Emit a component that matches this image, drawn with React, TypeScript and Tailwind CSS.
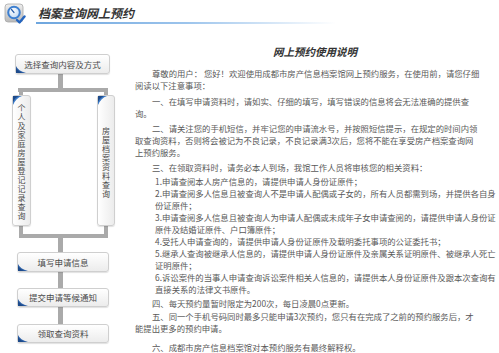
import React from "react";

const font = "font-['Noto_Sans_CJK_SC','Noto_Sans',sans-serif]";

function CornerBL() {
  return (
    <svg className="absolute left-0 bottom-0" width="10" height="7" viewBox="0 0 10 7">
      <path d="M0 0 Q2 5 10 7 L0 7 Z" fill="#2c5fa6" />
      <path d="M0 2 Q2 5.5 7 7 L0 7 Z" fill="#1d4a8a" />
    </svg>
  );
}

function CornerTL() {
  return (
    <svg className="absolute left-0 top-0" width="9" height="9" viewBox="0 0 9 9">
      <path d="M0 0 L9 0 Q3 2 0 9 Z" fill="#3a78c4" />
      <path d="M0 0 L6 0 Q2 1.5 0 6 Z" fill="#1d4a8a" />
    </svg>
  );
}

function HBox({ text, h, ml, w }: { text: string; h: string; ml: string; w: string }) {
  return (
    <div
      className={`relative ${ml} ${w} ${h} rounded-[3px] border border-[#cfcfcf] bg-gradient-to-b from-white to-[#ececec] shadow-[0_1px_1px_rgba(0,0,0,0.12)] flex items-center justify-center text-[8.5px] leading-none text-[#4a4a4a]`}
    >
      {text}
      <CornerBL />
    </div>
  );
}

function VBox({ text, w }: { text: string; w: string }) {
  return (
    <div
      className={`relative ${w} h-[131px] rounded-[3px] border border-[#cfcfcf] bg-gradient-to-r from-white to-[#ececec] shadow-[0_1px_1px_rgba(0,0,0,0.12)] flex items-center justify-center pt-[4px] text-[8px] text-[#4a4a4a]`}
    >
      <div className="[writing-mode:vertical-rl] tracking-[1px] leading-[9px]">{text}</div>
      <CornerTL />
    </div>
  );
}

const bar = "bg-[#aaaaaa]";

function Flow() {
  return (
    <div className="w-[120px] shrink-0 flex flex-col pt-[30px]">
      <HBox text="选择查询内容及方式" h="h-[20px]" ml="ml-[15px]" w="w-[95px]" />
      <div className={`ml-[58px] w-[5px] h-[14px] ${bar}`} />
      <div className={`ml-[18px] w-[90px] h-[4px] ${bar}`} />
      <div className="flex">
        <div className="ml-[12px] flex flex-col">
          <div className={`ml-[7px] w-[4px] h-[3px] ${bar}`} />
          <VBox text="个人及家庭房屋登记记录查询" w="w-[19px]" />
          <div className={`ml-[7px] w-[4px] h-[8px] ${bar}`} />
        </div>
        <div className="ml-[66px] flex flex-col">
          <div className={`ml-[7px] w-[4px] h-[3px] ${bar}`} />
          <VBox text="房屋档案资料查询" w="w-[18px]" />
          <div className={`ml-[7px] w-[4px] h-[8px] ${bar}`} />
        </div>
      </div>
      <div className={`ml-[19px] w-[89px] h-[4px] ${bar}`} />
      <div className={`ml-[58px] w-[5px] h-[14px] ${bar}`} />
      <HBox text="填写申请信息" h="h-[20px]" ml="ml-[17px]" w="w-[92px]" />
      <div className={`ml-[58px] w-[5px] h-[16px] ${bar}`} />
      <HBox text="提交申请等候通知" h="h-[19px]" ml="ml-[17px]" w="w-[92px]" />
      <div className={`ml-[58px] w-[5px] h-[17px] ${bar}`} />
      <HBox text="领取查询资料" h="h-[19px]" ml="ml-[17px]" w="w-[92px]" />
    </div>
  );
}

function P({ lines, mt, pl = "pl-0" }: { lines: string[]; mt: string; pl?: string }) {
  return (
    <div className={`${mt} ${pl}`}>
      {lines.map((l, i) => (
        <div key={i} className={`h-[12px] leading-[12px] whitespace-nowrap ${i === 0 && pl === "pl-0" ? "pl-[17px]" : ""}`}>
          {l}
        </div>
      ))}
    </div>
  );
}

function Content() {
  return (
    <div className="w-[379px] shrink-0 pl-[15px] pr-[4px] flex flex-col">
      <div className="mt-[21px] h-[14px] leading-[14px] text-center text-[10.5px] font-bold italic text-[#333]">
        网上预约使用说明
      </div>
      <div className="text-[8.35px] text-[#595959]">
        <P
          mt="mt-[8px]"
          lines={[
            "尊敬的用户： 您好！欢迎使用成都市房产信息档案馆网上预约服务，在使用前，请您仔细",
            "阅读以下注意事项：",
          ]}
        />
        <P
          mt="mt-[4px]"
          lines={["一、在填写申请资料时，请如实、仔细的填写，填写错误的信息将会无法准确的提供查", "询。"]}
        />
        <P
          mt="mt-[3px]"
          lines={[
            "二、请关注您的手机短信，并牢记您的申请流水号，并按照短信提示，在规定的时间内领",
            "取查询资料，否则将会被记为不良记录，不良记录满3次后，您将不能在享受房产档案查询网",
            "上预约服务。",
          ]}
        />
        <P mt="mt-[3px]" lines={["三、在领取资料时，请务必本人到场，我馆工作人员将审核您的相关资料："]} />
        <P
          mt="mt-[2px]"
          pl="pl-[20px]"
          lines={[
            "1.申请查阅本人房产信息的，请提供申请人身份证原件；",
            "2.申请查阅多人信息且被查询人不是申请人配偶或子女的，所有人员都需到场，并提供各自身",
            "份证原件；",
            "3.申请查阅多人信息且被查询人为申请人配偶或未成年子女申请查阅的，请提供申请人身份证",
            "原件及结婚证原件、户口簿原件；",
            "4.受托人申请查询的，请提供申请人身份证原件及载明委托事项的公证委托书；",
            "5.继承人查询被继承人信息的，请提供申请人身份证原件及亲属关系证明原件、被继承人死亡",
            "证明原件；",
            "6.诉讼案件的当事人申请查询诉讼案件相关人信息的，请提供本人身份证原件及跟本次查询有",
            "直接关系的法律文书原件。",
          ]}
        />
        <P mt="mt-[2px]" lines={["四、每天预约量暂时限定为200次，每日凌晨0点更新。"]} />
        <P
          mt="mt-[1px]"
          lines={["五、同一个手机号码同时最多只能申请3次预约，您只有在完成了之前的预约服务后，才", "能提出更多的预约申请。"]}
        />
        <P mt="mt-[7px]" lines={["六、成都市房产信息档案馆对本预约服务有最终解释权。"]} />
      </div>
    </div>
  );
}

function HeaderIcon() {
  return (
    <svg width="22" height="22" viewBox="0 0 22 22">
      <defs>
        <linearGradient id="ig" x1="0" y1="0" x2="0" y2="1">
          <stop offset="0" stopColor="#eeeeee" />
          <stop offset="1" stopColor="#b9b9b9" />
        </linearGradient>
        <radialGradient id="face" cx="0.4" cy="0.35" r="0.7">
          <stop offset="0" stopColor="#ffffff" />
          <stop offset="1" stopColor="#bcd6f2" />
        </radialGradient>
      </defs>
      <rect x="1" y="1" width="18" height="18" rx="3" fill="url(#ig)" stroke="#a8a8a8" strokeWidth="0.8" />
      <circle cx="10" cy="9.5" r="5.8" fill="url(#face)" stroke="#3d7fd0" strokeWidth="2" />
      <path d="M10 9.5 L7.5 6.5" stroke="#2a5ea8" strokeWidth="1.2" strokeLinecap="round" />
      <path d="M13 17 L15.5 19.5 L20.5 13.5" stroke="#2566c0" strokeWidth="2.4" fill="none" strokeLinecap="round" strokeLinejoin="round" />
    </svg>
  );
}

export default function App() {
  return (
    <div className={`w-[499px] h-[353px] bg-white overflow-hidden ${font}`}>
      <div className="flex items-start h-[24px]">
        <div className="ml-[4px] mt-[3px]">
          <HeaderIcon />
        </div>
        <div className="ml-[10px] flex flex-col">
          <div className="pl-[2px] mt-[6px] h-[14px] leading-[14px] text-[12px] font-bold italic text-[#333]">
            档案查询网上预约
          </div>
          <div className="mt-[2px] w-[300px] h-[2px] bg-gradient-to-r from-[#6ea6de] via-[#9cc4ec] to-transparent" />
        </div>
      </div>
      <div className="flex">
        <Flow />
        <Content />
      </div>
    </div>
  );
}
